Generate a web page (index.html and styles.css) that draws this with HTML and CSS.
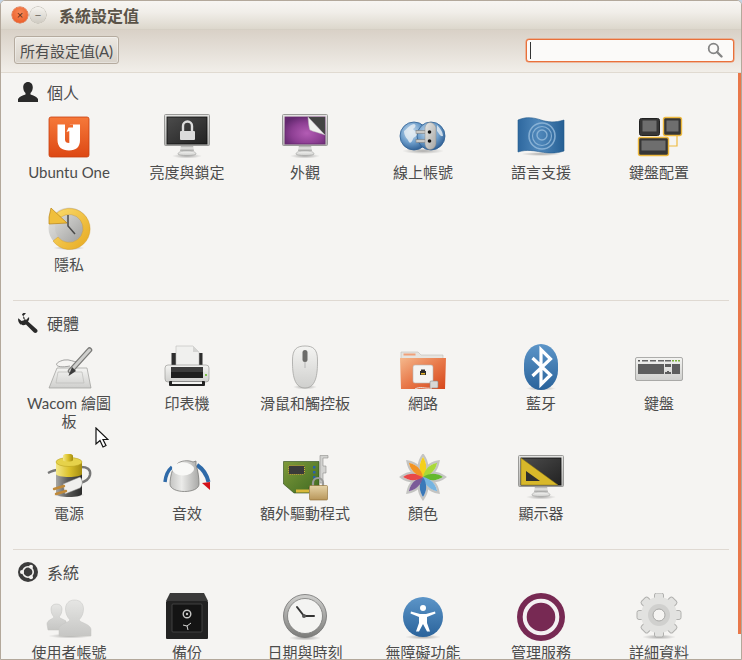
FILE: index.html
```html
<!DOCTYPE html>
<html lang="zh-Hant">
<head>
<meta charset="utf-8">
<title>系統設定值</title>
<link rel="stylesheet" href="styles.css">
</head>
<body>
<svg class="defs" width="0" height="0" aria-hidden="true">
  <defs>
    <linearGradient id="gFrame" x1="0" y1="0" x2="0" y2="1"><stop offset="0" stop-color="#e4e4e2"/><stop offset="1" stop-color="#b4b4b2"/></linearGradient>
    <linearGradient id="gStand" x1="0" y1="0" x2="0" y2="1"><stop offset="0" stop-color="#8e8e8c"/><stop offset=".5" stop-color="#e6e6e4"/><stop offset="1" stop-color="#a8a8a6"/></linearGradient>
    <linearGradient id="gDark" x1="0" y1="0" x2="1" y2="1"><stop offset="0" stop-color="#4c4c4c"/><stop offset="1" stop-color="#222"/></linearGradient>
    <linearGradient id="gOrange" x1="0" y1="0" x2="0" y2="1"><stop offset="0" stop-color="#f6793a"/><stop offset="1" stop-color="#dd4814"/></linearGradient>
    <radialGradient id="gPurple" cx=".55" cy=".6" r=".65"><stop offset="0" stop-color="#b35cb4"/><stop offset=".6" stop-color="#8d3f93"/><stop offset="1" stop-color="#642a70"/></radialGradient>
    <linearGradient id="gBlue" x1="0" y1="0" x2="0" y2="1"><stop offset="0" stop-color="#5c95c8"/><stop offset="1" stop-color="#2a639b"/></linearGradient>
    <linearGradient id="gFlag" x1="0" y1="0" x2="1" y2="0"><stop offset="0" stop-color="#2e689f"/><stop offset=".45" stop-color="#5088bb"/><stop offset="1" stop-color="#255f94"/></linearGradient>
    <radialGradient id="gGlobe" cx=".4" cy=".35" r=".7"><stop offset="0" stop-color="#cfe0ef"/><stop offset=".55" stop-color="#6f9fcc"/><stop offset="1" stop-color="#2a5a90"/></radialGradient>
    <linearGradient id="gYellow" x1="0" y1="0" x2="1" y2="1"><stop offset="0" stop-color="#fbdc6e"/><stop offset="1" stop-color="#e6a81e"/></linearGradient>
    <linearGradient id="gGrey" x1="0" y1="0" x2="1" y2="1"><stop offset="0" stop-color="#e8e8e6"/><stop offset="1" stop-color="#a6a6a4"/></linearGradient>
    <linearGradient id="gRim" x1="0" y1="0" x2="0" y2="1"><stop offset="0" stop-color="#d0d0ce"/><stop offset="1" stop-color="#7c7c7a"/></linearGradient>
    <linearGradient id="gFace" x1="0" y1="0" x2="1" y2="1"><stop offset="0" stop-color="#dcdcda"/><stop offset="1" stop-color="#a0a09e"/></linearGradient>
    <linearGradient id="gLight" x1="0" y1="0" x2="0" y2="1"><stop offset="0" stop-color="#f4f4f2"/><stop offset="1" stop-color="#cfcfcd"/></linearGradient>
    <linearGradient id="gPerson" x1="0" y1="0" x2="0" y2="1"><stop offset="0" stop-color="#e6e6e4"/><stop offset="1" stop-color="#c6c6c4"/></linearGradient>
    <linearGradient id="gKnob" x1="0" y1="0" x2="1" y2="0"><stop offset="0" stop-color="#c4c4c2"/><stop offset=".4" stop-color="#ebebe9"/><stop offset="1" stop-color="#a8a8a6"/></linearGradient>
    <linearGradient id="gFolder" x1="0" y1="0" x2="1" y2="1"><stop offset="0" stop-color="#f5b88c"/><stop offset=".5" stop-color="#e8794a"/><stop offset="1" stop-color="#d6461a"/></linearGradient>
    <linearGradient id="gBatt" x1="0" y1="0" x2="1" y2="0"><stop offset="0" stop-color="#a8a8a6"/><stop offset=".45" stop-color="#5a5a58"/><stop offset="1" stop-color="#2c2c2c"/></linearGradient>
    <linearGradient id="gBattY" x1="0" y1="0" x2="1" y2="0"><stop offset="0" stop-color="#f4e88a"/><stop offset=".5" stop-color="#dcc22c"/><stop offset="1" stop-color="#a48c10"/></linearGradient>
    <linearGradient id="gBrass" x1="0" y1="0" x2="0" y2="1"><stop offset="0" stop-color="#e6d3a6"/><stop offset="1" stop-color="#b8965a"/></linearGradient>
    <linearGradient id="gPcb" x1="0" y1="0" x2="1" y2="1"><stop offset="0" stop-color="#7f9a3a"/><stop offset="1" stop-color="#3f6a22"/></linearGradient>
    <radialGradient id="gShadow"><stop offset="0" stop-color="#000" stop-opacity=".3"/><stop offset="1" stop-color="#000" stop-opacity="0"/></radialGradient>
    <symbol id="monitor" viewBox="0 0 48 48">
      <ellipse cx="24" cy="43" rx="15" ry="2.500" fill="url(#gShadow)"/>
      <path d="M18 32h12l1 6h-14z" fill="url(#gStand)"/>
      <path d="M15 41c0-2 3-3 9-3s9 1 9 3-18 2-18 0z" fill="url(#gLight)" stroke="#a0a09e" stroke-width=".6"/>
      <rect x="1.500" y="1.500" width="45" height="31" rx="1" fill="url(#gFrame)" stroke="#9a9a98"/>
    </symbol>
  </defs>
</svg>

<div class="window">
  <header class="titlebar">
    <div class="winbtns">
      <span class="winbtn close">×</span>
      <span class="winbtn min">−</span>
    </div>
    <span class="title">系統設定值</span>
  </header>

  <div class="toolbar">
    <button class="allbtn">所有設定值(A)</button>
    <div class="search">
      <span class="caret"></span>
      <svg class="searchicon" width="16" height="16" viewBox="0 0 16 16"><circle cx="6.500" cy="6.500" r="4.800" fill="none" stroke="#858585" stroke-width="1.800"/><path d="M10 10l4.500 4.500" stroke="#858585" stroke-width="2.400" stroke-linecap="round"/></svg>
    </div>
  </div>

  <main class="content">
    <section class="section first">
      <h2 class="sechead">
        <svg class="secicon" width="20" height="20" viewBox="0 0 20 20"><path d="M10 0c3 0 4.800 2.300 4.800 5.300 0 2.500-1 4.600-2.300 5.700v1.600c2.800 1 6.500 2.500 7.500 4.400v3H0v-3c1-1.900 4.700-3.400 7.500-4.400V11C6.200 9.900 5.200 7.800 5.200 5.300 5.200 2.300 7 0 10 0z" fill="#2a2a2a"/></svg>
        個人
      </h2>
      <div class="grid">
        <div class="item">
          <svg class="icon" viewBox="0 0 48 48"><rect x="4" y="4" width="40" height="40" rx="2" fill="url(#gOrange)" stroke="#c8400f" stroke-width=".8"/><path d="M12.500 11.500h7.500v15c0 2.500 1.500 3.500 4.300 3.500V18l-2.800 1 3.500-7.500h10V27c0 7-4 10.500-11 10.500S12.500 34 12.500 27z" fill="#fff"/><path d="M28 11.500h-3.500l-1.200 3h4.700z" fill="#f06a2c"/></svg>
          <span class="label">Ubuntu One</span>
        </div>
        <div class="item">
          <svg class="icon" viewBox="0 0 48 48"><use href="#monitor"/><rect x="4" y="4" width="40" height="27" fill="url(#gDark)" stroke="#111" stroke-width=".8"/><rect x="17" y="18" width="15" height="9" rx="1" fill="#dcdcdc"/><path d="M20 18v-5a4.500 4.500 0 0 1 9 0v5" fill="none" stroke="#dcdcdc" stroke-width="2.400"/></svg>
          <span class="label">亮度與鎖定</span>
        </div>
        <div class="item">
          <svg class="icon" viewBox="0 0 48 48"><use href="#monitor"/><rect x="4" y="4" width="40" height="27" fill="url(#gPurple)" stroke="#6a2a70" stroke-width=".8"/><path d="M27 4h17v18z" fill="#444"/><path d="M27 4c.5 6 1 11 2 13 3 1.500 10 3 15 5z" fill="#f0f0ee" stroke="#bbb" stroke-width=".5"/></svg>
          <span class="label">外觀</span>
        </div>
        <div class="item">
          <svg class="icon" viewBox="0 0 48 48"><ellipse cx="24" cy="38" rx="21" ry="3" fill="url(#gShadow)"/><circle cx="15" cy="23" r="14" fill="url(#gGlobe)" stroke="#2f5f93" stroke-width=".8"/><path d="M5 18c3-2 5-6 10-7 3 1 1 4-1 5 1 2 4 2 5 5-1 3-4 2-5 5-1 3-3 5-4 3-1-3-5-5-5-11z" fill="#e9eff4" opacity=".8"/><circle cx="32" cy="23" r="14" fill="url(#gGlobe)" stroke="#2f5f93" stroke-width=".8"/><path d="M38 12c3 3 6 7 6 11-3 1-4-3-6-5z" fill="#e9eff4" opacity=".8"/><rect x="17" y="17.500" width="10" height="3" fill="#c8c8c6" stroke="#777" stroke-width=".5"/><rect x="17" y="26.500" width="10" height="3" fill="#c8c8c6" stroke="#777" stroke-width=".5"/><path d="M31 9.500c-3 0-5 3-5 6v15c0 3 2 6 5 6 3 0 6-3 6-6v-15c0-3-3-6-6-6z" fill="url(#gGrey)" stroke="#8a8a88" stroke-width=".5"/><circle cx="30.500" cy="19" r="1.800" fill="#111"/><circle cx="30.500" cy="28" r="1.800" fill="#111"/></svg>
          <span class="label">線上帳號</span>
        </div>
        <div class="item">
          <svg class="icon" viewBox="0 0 48 48"><ellipse cx="24" cy="41" rx="20" ry="2" fill="url(#gShadow)"/><path d="M1 7C10 3 18 5 24 7s14 3 23 0v31c-9 3-17 2-23 1S10 36 1 39z" fill="url(#gFlag)" stroke="#245a8c" stroke-width=".6"/><g fill="none" stroke="#9cc0df" stroke-opacity=".75"><circle cx="25" cy="23" r="13" stroke-width="1.600"/><circle cx="25" cy="23" r="9.500" stroke-width="1.200"/><circle cx="25" cy="22" r="5" stroke-width="1.400"/></g></svg>
          <span class="label">語言支援</span>
        </div>
        <div class="item">
          <svg class="icon" viewBox="0 0 48 48"><path d="M42 23v10h-8" fill="none" stroke="#eeb93e" stroke-width="1.200"/><rect x="4.500" y="5.500" width="20" height="17" rx="2" fill="#363636" stroke="#222"/><rect x="7.500" y="7.500" width="14" height="11" fill="#6e6e6e"/><rect x="28.500" y="4.500" width="18" height="18" rx="2" fill="#363636" stroke="#eeb93e" stroke-width="1.400"/><rect x="31.500" y="7.500" width="12" height="11" fill="#6e6e6e"/><rect x="3.500" y="24.500" width="30" height="18" rx="2" fill="#363636" stroke="#eeb93e" stroke-width="1.400"/><rect x="6.500" y="27.500" width="24" height="10" fill="#6e6e6e"/></svg>
          <span class="label">鍵盤配置</span>
        </div>
        <div class="item">
          <svg class="icon" viewBox="0 0 48 48"><ellipse cx="24" cy="43" rx="16" ry="2" fill="url(#gShadow)"/><circle cx="24" cy="23" r="20.500" fill="url(#gGrey)"/><circle cx="24" cy="23" r="14" fill="url(#gFace)"/><path d="M8 12A20.500 20.500 0 1 1 8 36l5-4A14 14 0 1 0 16 12z" fill="url(#gYellow)" stroke="#d0961c" stroke-width=".4"/><path d="M4 12L6 3l16 15-18 1z" fill="#f0bf3c" stroke="#b98414" stroke-width=".7"/><path d="M23 10v11l7 8" fill="none" stroke="#4a4a4a" stroke-width="1.500"/></svg>
          <span class="label">隱私</span>
        </div>
      </div>
    </section>

    <section class="section">
      <h2 class="sechead">
        <svg class="secicon" width="20" height="20" viewBox="0 0 20 20"><path d="M6 0c1 0 1.500 0 2 .300L5 3.200l.5 2.800 2.800.7L11 4c.5 2-.2 3.500-1 4.500l9 8c1 1.500.5 2.500-.3 3-.8.600-2 .800-3-.2L8 11.500c-2 1-4.500 1-6-.5C.5 9.500-.3 7 .3 5.200L3.500 8 6 7.200 6.800 5 4 1.800C4.500.5 5 0 6 0z" fill="#2a2a2a"/></svg>
        硬體
      </h2>
      <div class="grid">
        <div class="item">
          <svg class="icon" viewBox="0 0 48 48"><path d="M12 24h30l4 20H4z" fill="url(#gLight)" stroke="#9c9c9a" stroke-width=".7"/><path d="M13 28h24l2 11H11z" fill="none" stroke="#c0c0be" stroke-width=".8"/><path d="M25 22C10 25 7 19 19 16c6-1 9 2 14 2" fill="none" stroke="#8c8c8a" stroke-width=".8"/><path d="M44.500 6l-19 21" stroke="#7a7a78" stroke-width="5.500" stroke-linecap="round"/><path d="M44.500 6l-19 21" stroke="#cfcfcd" stroke-width="3" stroke-linecap="round"/><path d="M27 23l4 4-7.500 5z" fill="#3c3c3c"/></svg>
          <span class="label">Wacom 繪圖板</span>
        </div>
        <div class="item">
          <svg class="icon" viewBox="0 0 48 48"><rect x="8.500" y="9" width="31" height="15" fill="#2e2e2e"/><path d="M13 2h17l6 6v16H13z" fill="#f0f0ee" stroke="#bdbdbb" stroke-width=".6"/><path d="M30 2v6h6z" fill="#d4d4d2"/><rect x="2" y="21" width="44" height="17" rx="3" fill="url(#gLight)" stroke="#8e8e8c" stroke-width=".6"/><rect x="8" y="23" width="32" height="11" fill="#1f1f1f"/><rect x="8" y="23" width="32" height="5" fill="#3c3c3c"/><rect x="6" y="37" width="36" height="5" rx="1" fill="#222"/><rect x="9" y="37.500" width="30" height="2.500" fill="#f4f4f2"/><rect x="42" y="30" width="2" height="2" fill="#7cc04a"/></svg>
          <span class="label">印表機</span>
        </div>
        <div class="item">
          <svg class="icon" viewBox="0 0 48 48"><ellipse cx="24" cy="43" rx="12" ry="2.500" fill="url(#gShadow)"/><path d="M24 2c8 0 12.500 3 12.500 14 0 10 0 28-12.500 28S11.500 26 11.500 16C11.500 5 16 2 24 2z" fill="url(#gLight)" stroke="#a4a4a2" stroke-width=".8"/><path d="M24 18v6" stroke="#aaa" stroke-width=".8"/><rect x="21.500" y="6" width="5" height="12" rx="2.500" fill="#6c6c6a"/></svg>
          <span class="label">滑鼠和觸控板</span>
        </div>
        <div class="item">
          <svg class="icon" viewBox="0 0 48 48"><path d="M2 8h17l3 3h22v8H2z" fill="#e6e4e0" stroke="#c0bcb6" stroke-width=".6"/><rect x="4.500" y="9.500" width="12" height="2" fill="#f0a078"/><path d="M1 14h46l-1 31H2z" fill="url(#gFolder)"/><rect x="14" y="21" width="20" height="18" rx="2" fill="#f4f4f2" stroke="#b6b6b4" stroke-width=".6"/><path d="M21 27h1v-1.500h4V27h1v4h-6z" fill="#2c2c2c"/><rect x="22" y="29" width="4" height="1.500" fill="#e2b12a"/><rect x="31" y="37" width="8" height="7" rx="1" fill="#d8d8d6" stroke="#8a8a88" stroke-width=".6"/><path d="M16 45c5-3 10 0 17-1" fill="none" stroke="#e8e8e6" stroke-width="1"/></svg>
          <span class="label">網路</span>
        </div>
        <div class="item">
          <svg class="icon" viewBox="0 0 48 48"><ellipse cx="24" cy="44.500" rx="15" ry="2" fill="url(#gShadow)"/><rect x="7" y="0" width="34" height="46" rx="17" ry="20" fill="url(#gBlue)"/><path d="M15.500 14L33.500 31 24 40.500V5.500L33.500 15 15.500 32" fill="none" stroke="#fff" stroke-width="3.200" stroke-linejoin="miter"/></svg>
          <span class="label">藍牙</span>
        </div>
        <div class="item">
          <svg class="icon" viewBox="0 0 48 48"><rect x=".5" y="13.500" width="47" height="23" rx="1.500" fill="url(#gLight)" stroke="#9a9a98" stroke-width=".8"/><rect x="3" y="16" width="2" height="1.500" fill="#555"/><rect x="7" y="16" width="6" height="1.500" fill="#666"/><rect x="15" y="16" width="6" height="1.500" fill="#666"/><rect x="23" y="16" width="6" height="1.500" fill="#666"/><rect x="30" y="16" width="6" height="1.500" fill="#666"/><rect x="37" y="16" width="2" height="1.500" fill="#7cb03c"/><rect x="40" y="16" width="2" height="1.500" fill="#7cb03c"/><rect x="43" y="16" width="2" height="1.500" fill="#7cb03c"/><rect x="3" y="20" width="26" height="10" fill="#5e5e5e"/><rect x="30" y="20" width="6" height="3" fill="#5e5e5e"/><path d="M32 27h2v1h2v2h-6v-2h2z" fill="#5e5e5e"/><rect x="37" y="20" width="8" height="10" fill="#5e5e5e"/></svg>
          <span class="label">鍵盤</span>
        </div>
        <div class="item">
          <svg class="icon" viewBox="0 0 48 48"><ellipse cx="24" cy="41" rx="16" ry="2.500" fill="url(#gShadow)"/><path d="M3 19c4-2 6-3 9-3M36 13c6 0 10 2 9 8-1 5-6 7-10 8" fill="none" stroke="#777" stroke-width="2.500"/><path d="M11 8h26v32c0 4-26 4-26 0z" fill="url(#gBatt)"/><path d="M11 8h26v12c0 4-26 4-26 0z" fill="url(#gBattY)"/><ellipse cx="24" cy="8" rx="13" ry="4.500" fill="#e6d24a" stroke="#b39b1a" stroke-width=".5"/><path d="M18 2c0-3 10-3 10 0v4c0 2-10 2-10 0z" fill="url(#gBattY)"/><path d="M18 30l17-7c3 3 3 8 0 11l-15 6z" fill="#efefed" stroke="#8a8a88" stroke-width=".5"/><path d="M19 32l-10 3M21 37l-10 3" stroke="#c08a3a" stroke-width="2.400" stroke-linecap="round"/></svg>
          <span class="label">電源</span>
        </div>
        <div class="item">
          <svg class="icon" viewBox="0 0 48 48"><path d="M2 28Q3 18 9 13" fill="none" stroke="#2f6aa8" stroke-width="3.500"/><path d="M34 11Q43 17 45.500 28" fill="none" stroke="#2f6aa8" stroke-width="4"/><path d="M39 29l8-1v8z" fill="#d3121a"/><path d="M7 30C7 24 9 14 13 11 17 6 26 6 30 8l3-1v4c2 5 3 13 3 19 0 10-29 10-29 0z" fill="url(#gKnob)" stroke="#7c7c7a" stroke-width=".8"/><ellipse cx="20" cy="15" rx="11" ry="6.500" fill="#f8f8f6"/></svg>
          <span class="label">音效</span>
        </div>
        <div class="item">
          <svg class="icon" viewBox="0 0 48 48"><path d="M2.500 7.500h35.500V33H28v6H13l-10.500-9z" fill="url(#gPcb)" stroke="#2c4a18" stroke-width=".6"/><rect x="7.500" y="11.500" width="16" height="9" rx="1" fill="#3a3a3a" stroke="#d9b83a" stroke-width="1" stroke-dasharray="1 1"/><rect x="15" y="35.500" width="13" height="3" fill="#d9b83a"/><g fill="#2a60a8"><rect x="32" y="12" width="2.500" height="2.500"/><rect x="32" y="17" width="2.500" height="2.500"/><rect x="32" y="22" width="2.500" height="2.500"/></g><path d="M39 1.500h8v2.500h-5v8h3v7h-3v10h-3z" fill="#d2d2d0" stroke="#8e8e8c" stroke-width=".6"/><path d="M32 33v-4a5 5 0 0 1 10 0v4" fill="none" stroke="#9a9a98" stroke-width="2.200"/><rect x="28.500" y="31.500" width="18" height="14.500" rx="1" fill="url(#gBrass)" stroke="#8a6a30" stroke-width=".6"/></svg>
          <span class="label">額外驅動程式</span>
        </div>
        <div class="item">
          <svg class="icon" viewBox="0 0 48 48">
            <g transform="translate(24 23)">
              <g fill="#fff" stroke="#c4c4c2" stroke-width="2.200">
                <path d="M0 0C-5.500-7-5-15 0-22C5-15 5.500-7 0 0z"/>
                <path transform="rotate(45)" d="M0 0C-5.500-7-5-15 0-22C5-15 5.500-7 0 0z"/>
                <path transform="rotate(90)" d="M0 0C-5.500-7-5-15 0-22C5-15 5.500-7 0 0z"/>
                <path transform="rotate(135)" d="M0 0C-5.500-7-5-15 0-22C5-15 5.500-7 0 0z"/>
                <path transform="rotate(180)" d="M0 0C-5.500-7-5-15 0-22C5-15 5.500-7 0 0z"/>
                <path transform="rotate(225)" d="M0 0C-5.500-7-5-15 0-22C5-15 5.500-7 0 0z"/>
                <path transform="rotate(270)" d="M0 0C-5.500-7-5-15 0-22C5-15 5.500-7 0 0z"/>
                <path transform="rotate(315)" d="M0 0C-5.500-7-5-15 0-22C5-15 5.500-7 0 0z"/>
              </g>
              <path fill="#f4d01c" d="M0 0C-4.500-7-4-14 0-20C4-14 4.500-7 0 0z"/>
              <path fill="#a8d83a" transform="rotate(45)" d="M0 0C-4.500-7-4-14 0-20C4-14 4.500-7 0 0z"/>
              <path fill="#64b82e" transform="rotate(90)" d="M0 0C-4.500-7-4-14 0-20C4-14 4.500-7 0 0z"/>
              <path fill="#76b4e0" transform="rotate(135)" d="M0 0C-4.500-7-4-14 0-20C4-14 4.500-7 0 0z"/>
              <path fill="#3a78b8" transform="rotate(180)" d="M0 0C-4.500-7-4-14 0-20C4-14 4.500-7 0 0z"/>
              <path fill="#7a5a98" transform="rotate(225)" d="M0 0C-4.500-7-4-14 0-20C4-14 4.500-7 0 0z"/>
              <path fill="#e84848" transform="rotate(270)" d="M0 0C-4.500-7-4-14 0-20C4-14 4.500-7 0 0z"/>
              <path fill="#f29424" transform="rotate(315)" d="M0 0C-4.500-7-4-14 0-20C4-14 4.500-7 0 0z"/>
            </g>
          </svg>
          <span class="label">顏色</span>
        </div>
        <div class="item">
          <svg class="icon" viewBox="0 0 48 48"><use href="#monitor"/><rect x="4" y="4" width="40" height="27" fill="url(#gDark)" stroke="#111" stroke-width=".8"/><path d="M4 4l37 27H4z" fill="#d8b82a" stroke="#8a7414" stroke-width=".5"/><path d="M9 17l14 10H9z" fill="#2e2e2e"/></svg>
          <span class="label">顯示器</span>
        </div>
      </div>
    </section>

    <section class="section">
      <h2 class="sechead">
        <svg class="secicon" width="20" height="20" viewBox="0 0 20 20"><circle cx="10" cy="10" r="10" fill="#3c3c3c"/><circle cx="10" cy="10" r="5.200" fill="none" stroke="#f5f4f2" stroke-width="1.600"/><circle cx="4" cy="10" r="2" fill="#f5f4f2"/><circle cx="13" cy="4.800" r="2" fill="#f5f4f2"/><circle cx="13" cy="15.200" r="2" fill="#f5f4f2"/></svg>
        系統
      </h2>
      <div class="grid">
        <div class="item">
          <svg class="icon" viewBox="0 0 48 48"><ellipse cx="25" cy="43" rx="22" ry="2.500" fill="url(#gShadow)"/><path d="M2 31c0-4 6-5 7-7-2-2-3-5-3-8 0-3 2-5 5.500-5s5.500 2 5.500 5c0 3-1 6-3 8 1 1.500 4 2 7 4v9H3z" fill="url(#gPerson)" stroke="#c0c0be" stroke-width=".5"/><path d="M14 36c0-5 9-6 11-9-3-3-4.500-7-4.500-11 0-5 3-9 9-9s9 4 9 9c0 4-1.500 8-4.500 11 2 3 11 4 12 9v7H14z" fill="url(#gPerson)" stroke="#c4c4c2" stroke-width=".5"/></svg>
          <span class="label">使用者帳號</span>
        </div>
        <div class="item">
          <svg class="icon" viewBox="0 0 48 48"><rect x="3" y="8" width="42" height="38" rx="1" fill="#222"/><path d="M7 0h34l4 8H3z" fill="#3a3a3a"/><rect x="9" y="11" width="30" height="28" rx="1" fill="#141414" stroke="#4a4a4a" stroke-width=".8"/><circle cx="24" cy="21" r="3.800" fill="none" stroke="#c8c8c6" stroke-width="1.400"/><circle cx="24" cy="21" r="1.200" fill="#c8c8c6"/><path d="M24 33l-4-1M24 33l4-3M24 33l1 4" stroke="#d8d8d6" stroke-width="1"/></svg>
          <span class="label">備份</span>
        </div>
        <div class="item">
          <svg class="icon" viewBox="0 0 48 48"><ellipse cx="24" cy="45" rx="16" ry="2.500" fill="url(#gShadow)"/><circle cx="24" cy="23" r="21.500" fill="url(#gRim)" stroke="#707070" stroke-width=".8"/><circle cx="24" cy="23" r="17.500" fill="#f4f4f2" stroke="#7a7a78" stroke-width=".8"/><path d="M23 23l-7-9M23 23l10 0" stroke="#333" stroke-width="2" stroke-linecap="round"/><circle cx="23" cy="23" r="2" fill="#555"/></svg>
          <span class="label">日期與時刻</span>
        </div>
        <div class="item">
          <svg class="icon" viewBox="0 0 48 48"><ellipse cx="24" cy="44" rx="18" ry="2.500" fill="url(#gShadow)"/><circle cx="24" cy="24" r="20" fill="url(#gBlue)"/><circle cx="24" cy="15" r="3" fill="#fff"/><path d="M12 18.500l9 2.500h6l9-2.500.5 2-8.500 3.500v6l3 8.500h-3L24 31l-4 7.500h-3l3-8.500v-6l-8.500-3.500z" fill="#fff"/></svg>
          <span class="label">無障礙功能</span>
        </div>
        <div class="item">
          <svg class="icon" viewBox="0 0 48 48"><circle cx="24" cy="24" r="24" fill="#772953"/><circle cx="24" cy="24" r="16.300" fill="none" stroke="#f4f0f2" stroke-width="4"/></svg>
          <span class="label">管理服務</span>
        </div>
        <div class="item">
          <svg class="icon" viewBox="0 0 48 48"><ellipse cx="24" cy="44" rx="17" ry="2.500" fill="url(#gShadow)"/><g transform="translate(24 22)"><g fill="#e2e2e0" stroke="#b0b0ae"><rect x="-4.500" y="-22" width="9" height="10" rx="2"/><rect x="-4.500" y="-22" width="9" height="10" rx="2" transform="rotate(45)"/><rect x="-4.500" y="-22" width="9" height="10" rx="2" transform="rotate(90)"/><rect x="-4.500" y="-22" width="9" height="10" rx="2" transform="rotate(135)"/><rect x="-4.500" y="-22" width="9" height="10" rx="2" transform="rotate(180)"/><rect x="-4.500" y="-22" width="9" height="10" rx="2" transform="rotate(225)"/><rect x="-4.500" y="-22" width="9" height="10" rx="2" transform="rotate(270)"/><rect x="-4.500" y="-22" width="9" height="10" rx="2" transform="rotate(315)"/></g><circle r="18" fill="#e2e2e0"/><circle r="11" fill="#d0d0ce"/><circle r="6" fill="#f5f4f2" stroke="#a8a8a6"/></g></svg>
          <span class="label">詳細資料</span>
        </div>
      </div>
    </section>
    <div class="scrollthumb"></div>
  </main>

  <svg class="cursor" width="14" height="21" viewBox="0 0 14 21"><path d="M1 1v16l4-3.500 3 6.500 3-1.500-3-6h5z" fill="#fff" stroke="#111" stroke-width="1.200"/></svg>
</div>
</body>
</html>
```

FILE: styles.css
```css
* { box-sizing: border-box; }

html, body {
  margin: 0;
  height: 100%;
  background: #c4d4e4;
}

.defs { display: block; height: 0; }

.window {
  position: relative;
  width: 742px;
  height: 660px;
  display: flex;
  flex-direction: column;
  overflow: hidden;
  border: 1px solid #b3a89b;
  border-radius: 5px 5px 0 0;
  background: #f5f4f2;
  font-family: Lato, "Noto Sans CJK TC", sans-serif;
  font-size: 15px;
  color: #4c4c4c;
}

.titlebar {
  flex: none;
  height: 29px;
  display: flex;
  align-items: center;
  padding-left: 11px;
  background: linear-gradient(#f7f5f2, #f1eee9 40%, #dcd7cc);
  border-bottom: 1px solid #d5cfc4;
}

.winbtns { display: flex; gap: 2px; }

.winbtn {
  width: 16px;
  height: 16px;
  border-radius: 50%;
  display: flex;
  align-items: center;
  justify-content: center;
  font-family: "Liberation Sans", sans-serif;
  font-size: 11px;
  line-height: 1;
}

.close {
  background: radial-gradient(circle at 50% 35%, #f88a58, #e8541e);
  color: #5a2a14;
  box-shadow: 0 0 0 .5px #c85a30;
}

.min {
  background: linear-gradient(#f6f4f0, #cfcbc2);
  color: #6a665e;
  box-shadow: 0 0 0 .5px #a8a49a;
}

.title {
  margin-left: 13px;
  font-family: "Noto Sans CJK TC", sans-serif;
  font-size: 16px;
  font-weight: 700;
  color: #5a5348;
}

.toolbar {
  flex: none;
  height: 43px;
  display: flex;
  align-items: center;
  justify-content: space-between;
  padding: 0 7px 2px 13px;
  background: linear-gradient(#d9d1c7, #f1eee9);
  border-bottom: 1px solid #e0dad1;
}

.allbtn {
  width: 105px;
  height: 28px;
  padding: 0;
  border: 1px solid #b5ab9f;
  border-radius: 3px;
  background: linear-gradient(#ece8e2, #d8d2c9);
  box-shadow: inset 0 0 0 1px rgba(255, 255, 255, .35);
  font: inherit;
  color: #4c4c4c;
}

.search {
  width: 208px;
  height: 23px;
  display: flex;
  align-items: center;
  justify-content: space-between;
  padding: 0 10px 0 3px;
  border: 1px solid #e9703a;
  border-radius: 3px;
  background: #fbfaf9;
  box-shadow: 0 0 0 .5px #ee8a5c;
}

.caret { width: 1px; height: 17px; background: #333; }
.searchicon { display: block; }

.content {
  position: relative;
  flex: 1;
  min-height: 0;
  padding-left: 9px;
  overflow: hidden;
}

.section { padding: 0 0 27px; margin-right: 12px; }
.section.first { padding-top: 9px; }

.section + .section::before {
  content: "";
  display: block;
  height: 1px;
  margin: 0 0 12px 3px;
  background: #dfd9d2;
}

.sechead {
  display: flex;
  align-items: center;
  gap: 9px;
  height: 20px;
  margin: 0 0 11px;
  padding-left: 8px;
  font-size: 16px;
  font-weight: 400;
  font-family: "Noto Sans CJK TC", sans-serif;
  color: #4c4c4c;
}

.secicon { flex: none; display: block; }

.grid {
  display: grid;
  grid-template-columns: repeat(6, 118px);
  row-gap: 24px;
}

.item {
  display: flex;
  flex-direction: column;
  align-items: center;
  min-height: 68px;
}

.icon { width: 48px; height: 48px; display: block; flex: none; }

.label {
  margin-top: 2px;
  max-width: 94px;
  text-align: center;
  line-height: 18px;
}

.scrollthumb {
  position: absolute;
  top: 0;
  right: 0;
  width: 3px;
  height: 561px;
  background: #e9784a;
}

.cursor {
  position: absolute;
  left: 94px;
  top: 426px;
}
```
